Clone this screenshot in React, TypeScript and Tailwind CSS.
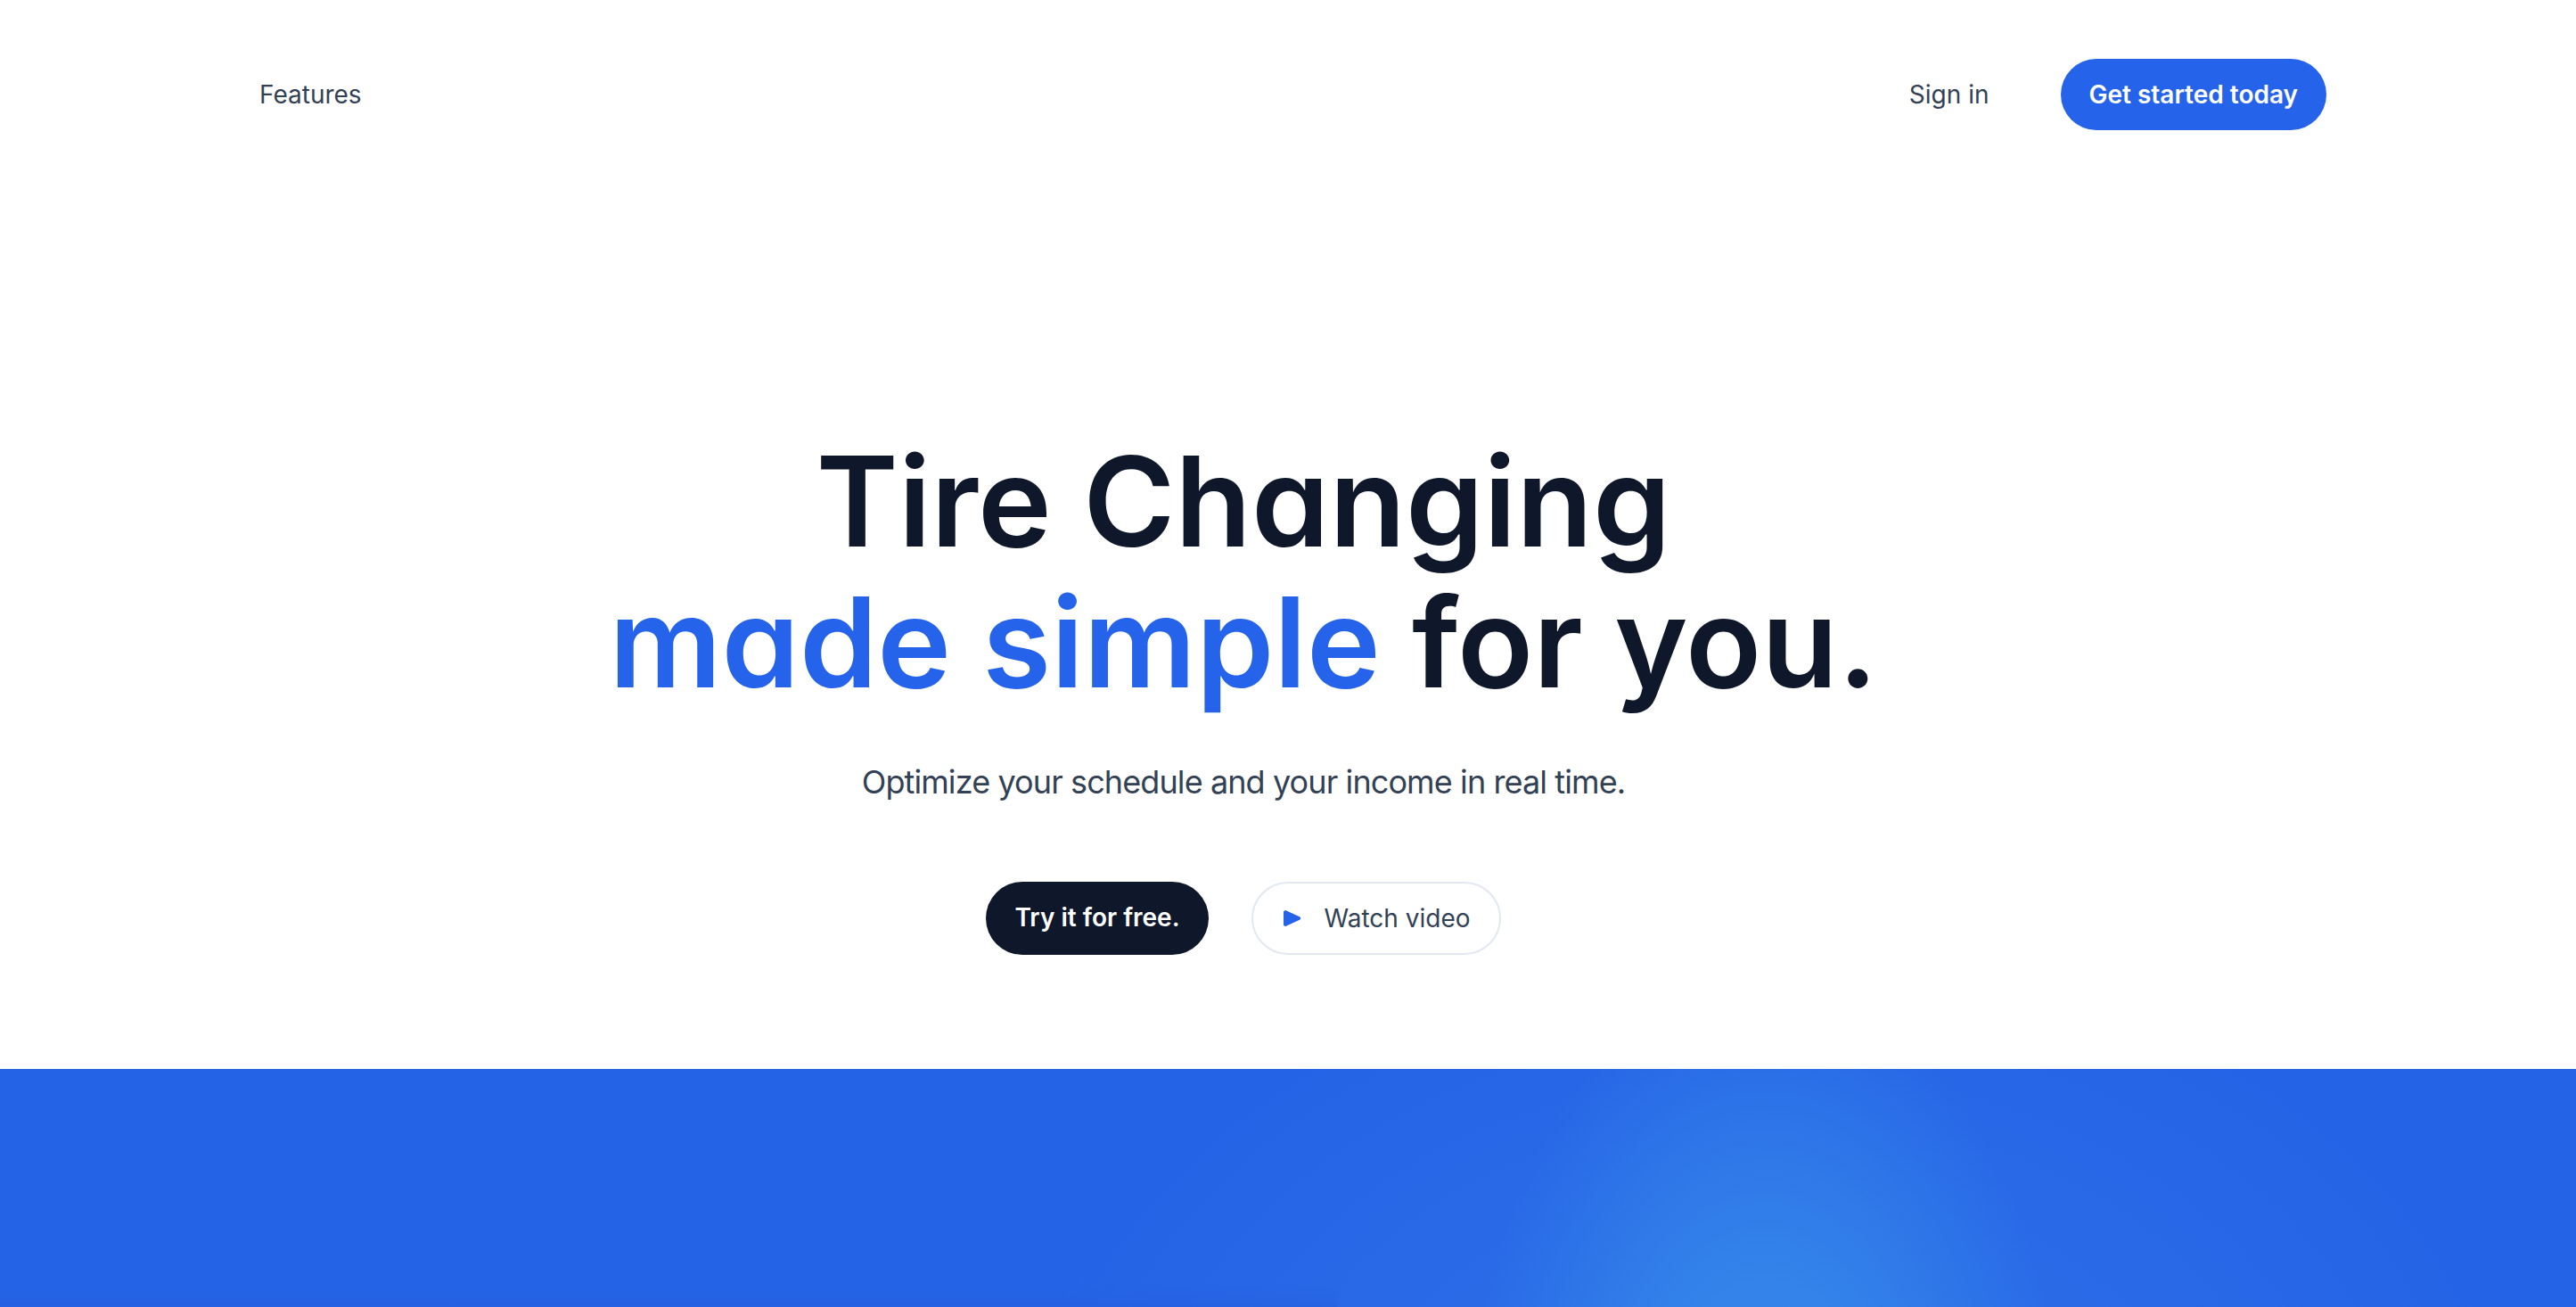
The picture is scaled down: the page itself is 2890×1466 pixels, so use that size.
import React from 'react';

const PlayIcon: React.FC = () => (
    <svg aria-hidden="true" viewBox="0 0 12 12" className="h-6 w-6 flex-none fill-[#2563eb]">
        <path d="m9.997 6.91-7.583 3.447A1 1 0 0 1 1 9.447V2.553a1 1 0 0 1 1.414-.91L9.997 5.09c.782.355.782 1.465 0 1.82Z" />
    </svg>
);

const Header: React.FC = () => (
    <header className="pl-[275px] pr-[280px] pt-[66px]">
        <nav className="flex items-center justify-between">
            <a href="#features" className="rounded-lg px-4 py-2 text-[28px] leading-[40px] text-[#334155]">
                Features
            </a>
            <div className="flex items-center gap-16">
                <a href="#signin" className="rounded-lg px-4 py-2 text-[28px] leading-[40px] text-[#334155]">
                    Sign in
                </a>
                <a
                    href="#register"
                    className="rounded-full bg-[#2563eb] px-8 py-5 text-[28px] leading-[40px] font-semibold text-white"
                >
                    Get started today
                </a>
            </div>
        </nav>
    </header>
);

const Hero: React.FC = () => (
    <section className="pr-[100px] pt-[337px] pb-[128px] text-center">
        <h1 className="text-[140px] leading-[158px] font-semibold tracking-normal text-[#0f172a] [font-feature-settings:'cv11']">
            Tire Changing
            <br />
            <span className="text-[#2563eb]">made simple</span> for you.
        </h1>
        <p className="mt-[50px] text-[36px] leading-[56px] tracking-tight text-[#334155]">
            Optimize your schedule and your income in real time.
        </p>
        <div className="mt-[84px] flex justify-center gap-12">
            <a
                href="#register"
                className="rounded-full bg-[#0f172a] px-8 py-5 text-[28px] leading-[40px] font-semibold text-white"
            >
                Try it for free.
            </a>
            <a
                href="#video"
                className="flex items-center rounded-full border-2 border-[#e2e8f0] px-8 py-[19px] text-[28px] leading-[40px] text-[#334155]"
            >
                <PlayIcon />
                <span className="ml-6">Watch video</span>
            </a>
        </div>
    </section>
);

const FeaturesBand: React.FC = () => (
    <section className="relative h-[270px] overflow-hidden bg-[#2563e6]">
        <div className="absolute inset-0 bg-[radial-gradient(ellipse_850px_600px_at_1990px_450px,#2c70e8_0%,#2a6ae7_50%,transparent_100%)]" />
        <div className="absolute inset-0 bg-[radial-gradient(ellipse_330px_520px_at_1980px_420px,#3687eb_0%,#3383ea_35%,transparent_100%)]" />
        <div className="absolute bottom-0 left-0 h-[30px] w-[1500px] bg-gradient-to-b from-transparent to-[#235fdf]/50" />
    </section>
);

export default function App() {
    return (
        <div className="h-[1466px] overflow-hidden bg-white font-['Inter',sans-serif] antialiased">
            <Header />
            <Hero />
            <FeaturesBand />
        </div>
    );
}
